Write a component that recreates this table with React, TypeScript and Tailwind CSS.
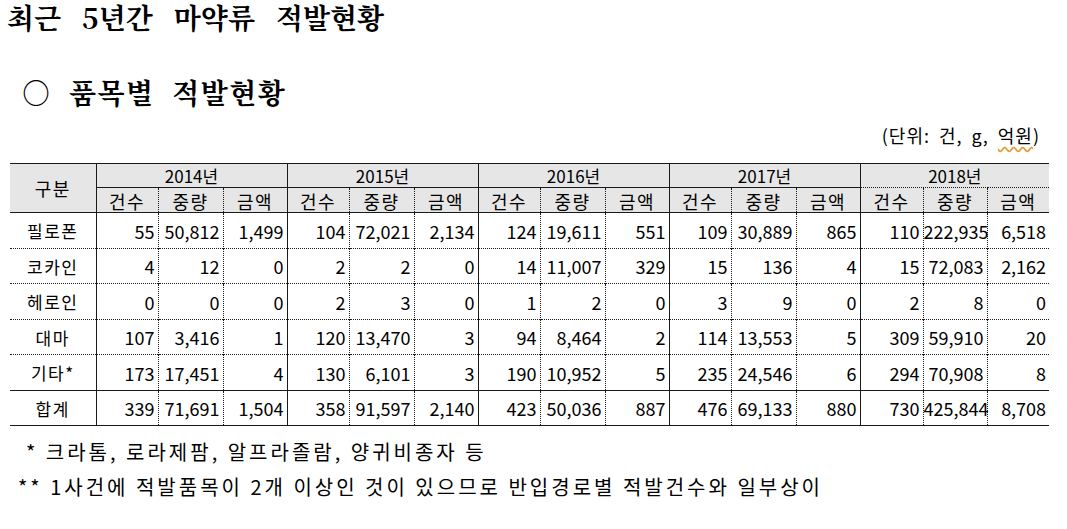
import React from "react";

const groups = ["2014년", "2015년", "2016년", "2017년", "2018년"];
const subs = ["건수", "중량", "금액"];
const colW = [
  62, 65, 64, 62, 65, 64, 62, 65, 64, 62, 65, 64, 63, 64, 62,
];

const rows: { label: string; values: string[] }[] = [
  {
    label: "필로폰",
    values: ["55", "50,812", "1,499", "104", "72,021", "2,134", "124", "19,611", "551", "109", "30,889", "865", "110", "222,935", "6,518"],
  },
  {
    label: "코카인",
    values: ["4", "12", "0", "2", "2", "0", "14", "11,007", "329", "15", "136", "4", "15", "72,083", "2,162"],
  },
  {
    label: "헤로인",
    values: ["0", "0", "0", "2", "3", "0", "1", "2", "0", "3", "9", "0", "2", "8", "0"],
  },
  {
    label: "대마",
    values: ["107", "3,416", "1", "120", "13,470", "3", "94", "8,464", "2", "114", "13,553", "5", "309", "59,910", "20"],
  },
  {
    label: "기타*",
    values: ["173", "17,451", "4", "130", "6,101", "3", "190", "10,952", "5", "235", "24,546", "6", "294", "70,908", "8"],
  },
];

const total = {
  label: "합계",
  values: ["339", "71,691", "1,504", "358", "91,597", "2,140", "423", "50,036", "887", "476", "69,133", "880", "730", "425,844", "8,708"],
};

const kr = { fontFamily: '"Noto Sans CJK KR", "Noto Sans", sans-serif' };
const serif = {
  fontFamily: '"Noto Serif CJK KR", "Noto Sans CJK KR", serif',
};

// right border per data column: solid at group ends, dotted inside
function colBorder(i: number) {
  if (i === 14) return "";
  return i % 3 === 2
    ? "border-r border-solid border-r-[#1a1a1a]"
    : "border-r border-dotted border-r-[#1a1a1a]";
}

function DataRow({
  label,
  values,
  last,
  isTotal,
  tall,
}: {
  label: string;
  values: string[];
  last?: boolean;
  isTotal?: boolean;
  tall?: boolean;
}) {
  const rowBorder = isTotal
    ? "border-y border-solid border-y-[#1a1a1a]"
    : last
      ? "border-b border-solid border-b-[#1a1a1a]"
      : "border-b border-dotted border-b-[#1a1a1a]";
  return (
    <tr className={`${tall ? "h-[36px]" : "h-[35px]"} ${rowBorder}`}>
      <td className="text-center text-[17px] border-r border-solid border-r-[#1a1a1a] tracking-[1.5px]">
        {label}
      </td>
      {values.map((v, i) => (
        <td
          key={i}
          className={`text-right pr-[3px] text-[18px] ${colBorder(i)}`}
        >
          {v}
        </td>
      ))}
    </tr>
  );
}

export default function App() {
  return (
    <div
      className="w-[1067px] h-[529px] bg-white text-black overflow-hidden flex flex-col"
      style={kr}
    >
      {/* Title */}
      <div
        className="pl-[7px] pt-[1px] text-[28px] leading-[32px] font-bold [word-spacing:14px]"
        style={serif}
      >
        최근 5년간 마약류 적발현황
      </div>

      <div
        className="mt-[43px] pl-[22px] text-[28px] leading-[32px] font-bold [word-spacing:9px] tracking-[1.5px]"
        style={serif}
      >
        ○ 품목별 적발현황
      </div>

      <div className="mt-[17px] pr-[27px] text-right text-[18px] leading-[20px] tracking-[1px] [word-spacing:4px]">
        (단위: 건, g,{" "}
        <span className="underline decoration-wavy decoration-[#e0a040] underline-offset-[3px]">
          억원
        </span>
        )
      </div>

      {/* Table */}
      <table className="mt-[18px] ml-[10px] w-[1039px] table-fixed border-collapse leading-none">
        <colgroup>
          <col className="w-[86px]" />
          {colW.map((w, i) => (
            <col key={i} style={{ width: w }} />
          ))}
        </colgroup>
        <thead className="bg-[#e6e6e6] font-normal">
          <tr className="h-[24px] border-t border-solid border-t-[#1a1a1a]">
            <th
              rowSpan={2}
              className="font-normal text-[18px] border-r border-b border-solid border-[#1a1a1a] tracking-[1.5px]"
            >
              구분
            </th>
            {groups.map((g, i) => (
              <th
                key={g}
                colSpan={3}
                className={`font-normal text-[17px] border-b border-dotted border-b-[#1a1a1a] ${
                  i < 4 ? "border-r border-solid border-r-[#1a1a1a]" : ""
                }`}
              >
                {g}
              </th>
            ))}
          </tr>
          <tr className="h-[25px] border-b border-solid border-b-[#1a1a1a]">
            {groups.flatMap((g) =>
              subs.map((s) => s + "|" + g),
            ).map((key, i) => (
              <th
                key={key}
                className={`font-normal text-[18px] pt-[2px] tracking-[1.5px] ${colBorder(i)}`}
              >
                {key.split("|")[0]}
              </th>
            ))}
          </tr>
        </thead>
        <tbody>
          {rows.map((r, i) => (
            <DataRow
              key={r.label}
              label={r.label}
              values={r.values}
              last={i === rows.length - 1}
              tall={i % 2 === 0}
            />
          ))}
          <DataRow label={total.label} values={total.values} isTotal />
        </tbody>
      </table>

      {/* Footnotes */}
      <div className="mt-[15px] pl-[26px] text-[20px] leading-[22px] tracking-[3px]">
        * 크라톰, 로라제팜, 알프라졸람, 양귀비종자 등
      </div>
      <div className="mt-[13px] pl-[18px] text-[20px] leading-[22px] tracking-[3px]">
        ** 1사건에 적발품목이 2개 이상인 것이 있으므로 반입경로별 적발건수와
        일부상이
      </div>
    </div>
  );
}
